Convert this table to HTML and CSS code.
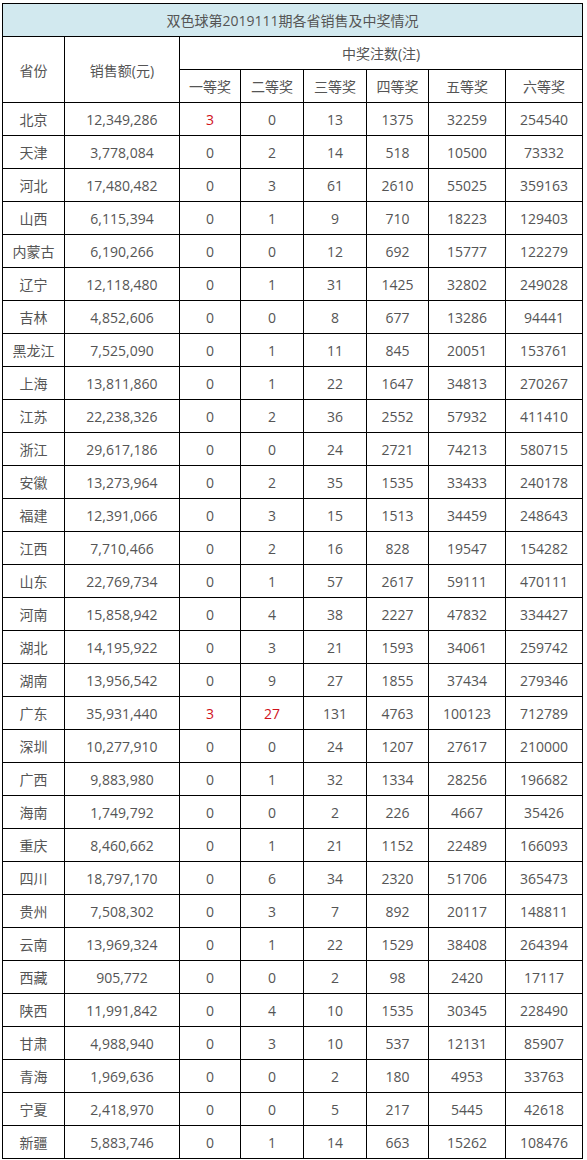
FILE: index.html
```html
<!DOCTYPE html>
<html lang="zh-CN">
<head>
<meta charset="utf-8">
<title>双色球第2019111期各省销售及中奖情况</title>
<link rel="stylesheet" href="styles.css">
</head>
<body>
<table class="lottery">
  <colgroup>
    <col class="c-prov"><col class="c-sale"><col class="c-p1"><col class="c-p2"><col class="c-p3"><col class="c-p4"><col class="c-p5"><col class="c-p6">
  </colgroup>
  <thead>
    <tr class="title-row"><th colspan="8">双色球第2019111期各省销售及中奖情况</th></tr>
    <tr class="head-row"><th rowspan="2">省份</th><th rowspan="2">销售额(元)</th><th colspan="6">中奖注数(注)</th></tr>
    <tr class="head-row"><th>一等奖</th><th>二等奖</th><th>三等奖</th><th>四等奖</th><th>五等奖</th><th>六等奖</th></tr>
  </thead>
  <tbody>
    <tr><td>北京</td><td>12,349,286</td><td class="red">3</td><td>0</td><td>13</td><td>1375</td><td>32259</td><td>254540</td></tr>
    <tr><td>天津</td><td>3,778,084</td><td>0</td><td>2</td><td>14</td><td>518</td><td>10500</td><td>73332</td></tr>
    <tr><td>河北</td><td>17,480,482</td><td>0</td><td>3</td><td>61</td><td>2610</td><td>55025</td><td>359163</td></tr>
    <tr><td>山西</td><td>6,115,394</td><td>0</td><td>1</td><td>9</td><td>710</td><td>18223</td><td>129403</td></tr>
    <tr><td>内蒙古</td><td>6,190,266</td><td>0</td><td>0</td><td>12</td><td>692</td><td>15777</td><td>122279</td></tr>
    <tr><td>辽宁</td><td>12,118,480</td><td>0</td><td>1</td><td>31</td><td>1425</td><td>32802</td><td>249028</td></tr>
    <tr><td>吉林</td><td>4,852,606</td><td>0</td><td>0</td><td>8</td><td>677</td><td>13286</td><td>94441</td></tr>
    <tr><td>黑龙江</td><td>7,525,090</td><td>0</td><td>1</td><td>11</td><td>845</td><td>20051</td><td>153761</td></tr>
    <tr><td>上海</td><td>13,811,860</td><td>0</td><td>1</td><td>22</td><td>1647</td><td>34813</td><td>270267</td></tr>
    <tr><td>江苏</td><td>22,238,326</td><td>0</td><td>2</td><td>36</td><td>2552</td><td>57932</td><td>411410</td></tr>
    <tr><td>浙江</td><td>29,617,186</td><td>0</td><td>0</td><td>24</td><td>2721</td><td>74213</td><td>580715</td></tr>
    <tr><td>安徽</td><td>13,273,964</td><td>0</td><td>2</td><td>35</td><td>1535</td><td>33433</td><td>240178</td></tr>
    <tr><td>福建</td><td>12,391,066</td><td>0</td><td>3</td><td>15</td><td>1513</td><td>34459</td><td>248643</td></tr>
    <tr><td>江西</td><td>7,710,466</td><td>0</td><td>2</td><td>16</td><td>828</td><td>19547</td><td>154282</td></tr>
    <tr><td>山东</td><td>22,769,734</td><td>0</td><td>1</td><td>57</td><td>2617</td><td>59111</td><td>470111</td></tr>
    <tr><td>河南</td><td>15,858,942</td><td>0</td><td>4</td><td>38</td><td>2227</td><td>47832</td><td>334427</td></tr>
    <tr><td>湖北</td><td>14,195,922</td><td>0</td><td>3</td><td>21</td><td>1593</td><td>34061</td><td>259742</td></tr>
    <tr><td>湖南</td><td>13,956,542</td><td>0</td><td>9</td><td>27</td><td>1855</td><td>37434</td><td>279346</td></tr>
    <tr><td>广东</td><td>35,931,440</td><td class="red">3</td><td class="red">27</td><td>131</td><td>4763</td><td>100123</td><td>712789</td></tr>
    <tr><td>深圳</td><td>10,277,910</td><td>0</td><td>0</td><td>24</td><td>1207</td><td>27617</td><td>210000</td></tr>
    <tr><td>广西</td><td>9,883,980</td><td>0</td><td>1</td><td>32</td><td>1334</td><td>28256</td><td>196682</td></tr>
    <tr><td>海南</td><td>1,749,792</td><td>0</td><td>0</td><td>2</td><td>226</td><td>4667</td><td>35426</td></tr>
    <tr><td>重庆</td><td>8,460,662</td><td>0</td><td>1</td><td>21</td><td>1152</td><td>22489</td><td>166093</td></tr>
    <tr><td>四川</td><td>18,797,170</td><td>0</td><td>6</td><td>34</td><td>2320</td><td>51706</td><td>365473</td></tr>
    <tr><td>贵州</td><td>7,508,302</td><td>0</td><td>3</td><td>7</td><td>892</td><td>20117</td><td>148811</td></tr>
    <tr><td>云南</td><td>13,969,324</td><td>0</td><td>1</td><td>22</td><td>1529</td><td>38408</td><td>264394</td></tr>
    <tr><td>西藏</td><td>905,772</td><td>0</td><td>0</td><td>2</td><td>98</td><td>2420</td><td>17117</td></tr>
    <tr><td>陕西</td><td>11,991,842</td><td>0</td><td>4</td><td>10</td><td>1535</td><td>30345</td><td>228490</td></tr>
    <tr><td>甘肃</td><td>4,988,940</td><td>0</td><td>3</td><td>10</td><td>537</td><td>12131</td><td>85907</td></tr>
    <tr><td>青海</td><td>1,969,636</td><td>0</td><td>0</td><td>2</td><td>180</td><td>4953</td><td>33763</td></tr>
    <tr><td>宁夏</td><td>2,418,970</td><td>0</td><td>0</td><td>5</td><td>217</td><td>5445</td><td>42618</td></tr>
    <tr><td>新疆</td><td>5,883,746</td><td>0</td><td>1</td><td>14</td><td>663</td><td>15262</td><td>108476</td></tr>
  </tbody>
</table>
</body>
</html>
```
FILE: styles.css
```css
html, body {
  margin: 0;
  padding: 0;
  background: #fff;
}
body {
  padding: 3px 0 0 2px;
  font-family: "Open Sans", "Noto Sans CJK SC", sans-serif;
  font-size: 14px;
  color: #555;
}
.lottery {
  border-collapse: collapse;
  table-layout: fixed;
  width: 580px;
}
.c-prov { width: 62px; }
.c-sale { width: 115px; }
.c-p1 { width: 61px; }
.c-p2 { width: 63px; }
.c-p3 { width: 63px; }
.c-p4 { width: 62px; }
.c-p5 { width: 77px; }
.c-p6 { width: 77px; }
.lottery th,
.lottery td {
  border: 1px solid #000;
  padding: 0;
  text-align: center;
  vertical-align: middle;
  font-weight: normal;
  white-space: nowrap;
}
.lottery tr {
  height: 33px;
}
.title-row th {
  background: #d2e9ef;
}
.red {
  color: #d0121b;
}
```
